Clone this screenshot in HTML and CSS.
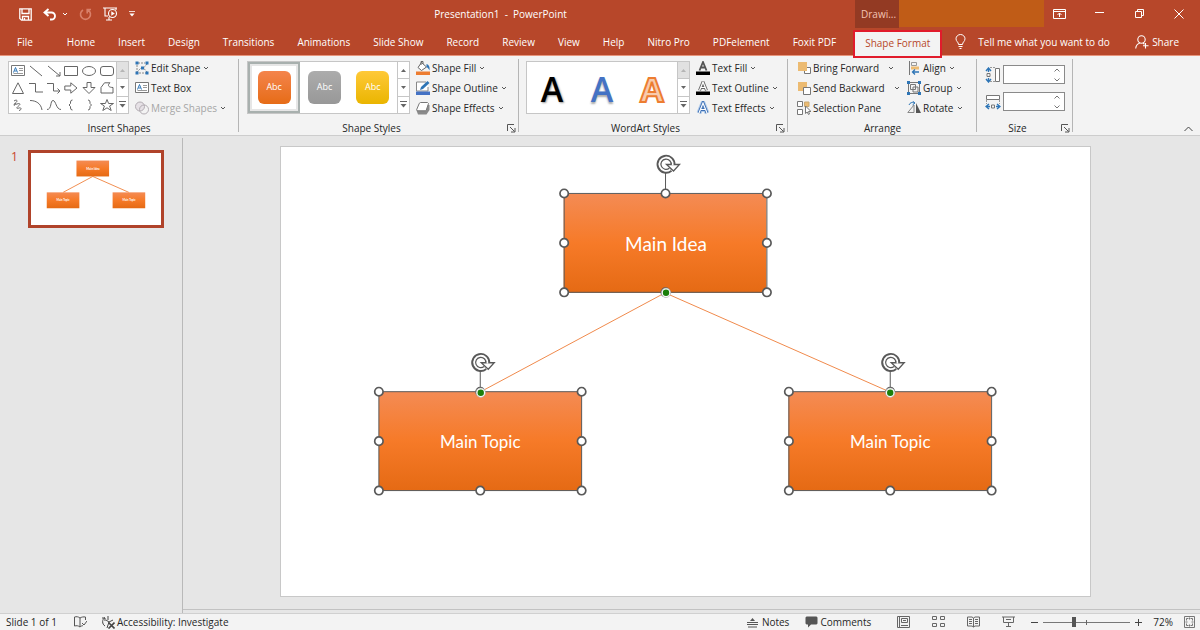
FILE: index.html
```html
<!DOCTYPE html>
<html lang="en">
<head>
<meta charset="utf-8">
<title>Presentation1 - PowerPoint</title>
<link rel="stylesheet" href="styles.css">
</head>
<body>
<svg class="defs" aria-hidden="true">
  <defs>
    <linearGradient id="orange" x1="0" y1="0" x2="0" y2="1">
      <stop offset="0" stop-color="#f48b54"/><stop offset=".5" stop-color="#f67a28"/><stop offset="1" stop-color="#e56a14"/>
    </linearGradient>
    <symbol id="chev" viewBox="0 0 6 6"><path d="M1 2l2 2 2-2" fill="none" stroke="currentColor"/></symbol>
    <symbol id="up" viewBox="0 0 7 7"><path d="M1 5l2.500-3 2.500 3z" fill="currentColor"/></symbol>
    <symbol id="down" viewBox="0 0 7 7"><path d="M1 2l2.500 3 2.500-3z" fill="currentColor"/></symbol>
    <symbol id="more" viewBox="0 0 7 7"><path d="M0 .5h7" stroke="currentColor"/><path d="M.5 3l3 3.500 3-3.500z" fill="currentColor"/></symbol>
    <symbol id="launch" viewBox="0 0 9 9"><path d="M.5 7V.5H7M3 3l4.500 4.500M8 4v4H4" fill="none" stroke="#555"/></symbol>
    <symbol id="textbox" viewBox="0 0 14 12"><path d="M.5.5h13v10H.5z" fill="#fff" stroke="#777"/><path d="M2.500 7.500l2-5 2 5M3.500 6h2" fill="none" stroke="#2e75b6"/><path d="M8 3.500h4M8 5.500h4M2.500 8.500H12" stroke="#999"/></symbol>
    <g id="handle"><circle r="4.200" fill="#fff" stroke="#595959" stroke-width="1.700"/></g>
    <g id="anchor"><circle r="4.700" fill="#fff" stroke="#aaa" stroke-width=".6"/><circle r="3.200" fill="#1a7f0a"/></g>
    <g id="frame">
      <path d="M0 0h203v99H0zM101.500 0v-21" fill="none" stroke="#595959"/>
      <use href="#handle"/><use href="#handle" x="101.500"/><use href="#handle" x="203"/>
      <use href="#handle" y="49.500"/><use href="#handle" x="203" y="49.500"/>
      <use href="#handle" y="99"/><use href="#handle" x="101.500" y="99"/><use href="#handle" x="203" y="99"/>
      <g transform="translate(102 -29)" fill="none">
        <path d="M4.500 5.200A7 7 0 1 1 7 0" stroke="#595959" stroke-width="5"/>
        <path d="M.5 0h13L7.500 6.500z" fill="#fff" stroke="#595959" stroke-width="1.300"/>
        <path d="M4.200 5A6.700 6.700 0 1 1 6.700 .8" stroke="#fff" stroke-width="1.800"/>
      </g>
    </g>
    <g id="diagram">
      <path class="link" d="M384.500 146L200 245M384.500 146L609 245"/>
      <rect x="283" y="47" width="203" height="99" fill="url(#orange)"/>
      <rect x="98" y="245" width="203" height="99" fill="url(#orange)"/>
      <rect x="508" y="245" width="203" height="99" fill="url(#orange)"/>
      <text class="idea" x="385.500" y="104">Main Idea</text>
      <text class="topic" x="199.500" y="301">Main Topic</text>
      <text class="topic" x="610" y="301">Main Topic</text>
    </g>
  </defs>
</svg>

<header class="titlebar">
  <div class="quick">
    <button aria-label="Save"><svg width="13" height="13" viewBox="0 0 13 13" fill="none" stroke="#fff" stroke-width="1.300"><path d="M.8.8h11.400v11.400H2.500L.8 10.500zM3 1v4.500h7V1M3.500 12V8.500h6V12M5.500 10v2"/></svg></button>
    <button class="undo" aria-label="Undo"><svg width="14" height="13" viewBox="0 0 14 13" fill="none" stroke="#fff" stroke-width="1.900"><path d="M5.500 1L1.500 4.500l4 3.500M2 4.500h6.500a3.500 3.500 0 0 1 0 7H7"/></svg><svg width="6" height="6"><use href="#chev"/></svg></button>
    <button aria-label="Repeat"><svg width="13" height="13" viewBox="0 0 13 13" fill="none" stroke="#d9806a" stroke-width="1.600"><path d="M4 2a5 5 0 1 0 5 0M8.200 5.500V1.500H12"/></svg></button>
    <button aria-label="Start from beginning"><svg width="15" height="14" viewBox="0 0 15 14" fill="none" stroke="#fff" stroke-width="1.100"><path d="M0 1h14M2 1v8h3M13 1v2M3 13h6M6 10v3"/><circle cx="9.500" cy="6.500" r="4"/><path d="M8.300 4.300l3.500 2.200-3.500 2.200z" fill="#fff" stroke="none"/></svg></button>
    <button aria-label="Customize Quick Access Toolbar"><svg width="6" height="6"><use href="#more"/></svg></button>
  </div>
  <h1>Presentation1&nbsp; -&nbsp; PowerPoint</h1>
  <span class="context">Drawi...</span>
  <span class="account"></span>
  <div class="window">
    <button aria-label="Ribbon Display Options"><svg width="13" height="10" viewBox="0 0 13 10" fill="none" stroke="#fff"><path d="M.5.5h12v9H.5zM1 2.500h11M6.500 8V4M4.500 6l2-2 2 2"/></svg></button>
    <button aria-label="Minimize"><svg width="9" height="9" viewBox="0 0 9 9" stroke="#fff"><path d="M0 3.500h9"/></svg></button>
    <button aria-label="Restore"><svg width="9" height="9" viewBox="0 0 9 9" fill="none" stroke="#fff"><path d="M.5 2.500h6v6h-6zM2.500 2V.5h6v6H7"/></svg></button>
    <button aria-label="Close"><svg width="10" height="10" viewBox="0 0 10 10" stroke="#fff"><path d="M.5.5l9 9M9.500.5l-9 9"/></svg></button>
  </div>
</header>

<nav class="tabs">
  <button class="file">File</button><button>Home</button><button>Insert</button><button>Design</button><button>Transitions</button><button>Animations</button><button>Slide Show</button><button>Record</button><button>Review</button><button>View</button><button>Help</button><button>Nitro Pro</button><button>PDFelement</button><button>Foxit PDF</button>
  <button class="active">Shape Format</button>
  <button class="tell"><svg width="11" height="15" viewBox="0 0 11 15" fill="none" stroke="#fff"><path d="M3.500 10.500C3.500 8 1 7.500 1 4.800a4.500 4.300 0 0 1 9 0C10 7.500 7.500 8 7.500 10.500zM3.500 12.500h4M4.500 14.500h2"/></svg>Tell me what you want to do</button>
  <button class="share"><svg width="14" height="14" viewBox="0 0 14 14" fill="none" stroke="#fff" stroke-width="1.100"><circle cx="6.500" cy="4.500" r="3.700"/><path d="M.7 13.500c.3-3 1.800-4.800 4-5.300M8 8.300l1.500 1M10.500 8v5.500M8 10.700h5.500"/></svg>Share</button>
</nav>

<section class="ribbon">
  <div class="group insert">
    <div class="tools">
      <div class="gallery">
        <div class="shapes">
          <button aria-label="Text Box"><svg width="14" height="12"><use href="#textbox"/></svg></button>
          <button aria-label="Line"><svg viewBox="0 0 14 12"><path d="M1 1l12 10"/></svg></button>
          <button aria-label="Arrow"><svg viewBox="0 0 14 12"><path d="M1 1l12 10M13 7v4H9"/></svg></button>
          <button aria-label="Rectangle"><svg viewBox="0 0 14 12"><path d="M.5 1.500h13v9H.5z"/></svg></button>
          <button aria-label="Oval"><svg viewBox="0 0 14 12"><ellipse cx="7" cy="6" rx="6.500" ry="4.500"/></svg></button>
          <button aria-label="Rounded Rectangle"><svg viewBox="0 0 14 12"><rect x=".5" y="1.500" width="13" height="9" rx="2.500"/></svg></button>
          <button aria-label="Triangle"><svg viewBox="0 0 14 12"><path d="M7 .8l5.500 10.700h-11z"/></svg></button>
          <button aria-label="Elbow Connector"><svg viewBox="0 0 14 12"><path d="M0 1.500h6.500v8.500H14"/></svg></button>
          <button aria-label="Elbow Arrow"><svg viewBox="0 0 14 12"><path d="M0 1.500h6.500V9H13M10.500 6.500L13 9l-2.500 2.500"/></svg></button>
          <button aria-label="Right Arrow"><svg viewBox="0 0 14 12"><path d="M.8 4h6V.8L13 6l-6.200 5.200V8h-6z"/></svg></button>
          <button aria-label="Down Arrow"><svg viewBox="0 0 14 12"><path d="M5 .5h4v5h4L7 11.500 1 5.500h4z"/></svg></button>
          <button aria-label="Freeform"><svg viewBox="0 0 14 12"><path d="M4.500.8h5.500c-3.500 3-.5 4.700 3 4.700v5.500H1V5.500z"/></svg></button>
          <button aria-label="Scribble"><svg viewBox="0 0 14 12"><path d="M3 2c3-2 4 0 2 1.500S3 6 6 5s4 0 1.500 2-2 3 .5 2 3 2 0 2.500M5 4C3 5 2 7 4 6"/></svg></button>
          <button aria-label="Arc"><svg viewBox="0 0 14 12"><path d="M1 1.500c6 0 11 3 12 9.500"/></svg></button>
          <button aria-label="Curve"><svg viewBox="0 0 14 12"><path d="M0 10.500c5 0 3-9 6-9s3 9 8 9"/></svg></button>
          <button aria-label="Left Brace"><svg viewBox="0 0 14 12"><path d="M8.500 1Q6.500 1 6.500 3v1.500L5 6l1.500 1.500V9q0 2 2 2"/></svg></button>
          <button aria-label="Right Brace"><svg viewBox="0 0 14 12"><path d="M6 1q2 0 2 2v1.500L9.500 6 8 7.500V9q0 2-2 2"/></svg></button>
          <button aria-label="Star"><svg viewBox="0 0 14 12"><path d="M7 .5l1.600 4h4.900L9.600 7l1.600 4.500L7 8.800l-4.200 2.700L4.400 7 .5 4.500h4.900z"/></svg></button>
        </div>
        <div class="scroll"><button class="off" aria-label="Up"><svg><use href="#up"/></svg></button><button aria-label="Down"><svg><use href="#down"/></svg></button><button aria-label="More"><svg><use href="#more"/></svg></button></div>
      </div>
      <div class="list">
        <button><svg class="ico" viewBox="0 0 14 14" fill="none"><path d="M2 4v7l4-4M3 2l7 0M12 3L8.500 7l3.500 4M4 12h7" stroke="#888" stroke-dasharray="2 1"/><path d="M.5.5h3v3h-3zM10.500.5h3v3h-3zM.5 10.500h3v3h-3zM10.500 10.500h3v3h-3zM6 5.500h3v3H6z" fill="#2e75b6"/></svg>Edit Shape<svg class="chev"><use href="#chev"/></svg></button>
        <button><svg class="ico" viewBox="0 -1 14 14"><use href="#textbox" width="14" height="12"/></svg>Text Box</button>
        <button disabled><svg class="ico" viewBox="0 0 14 14" fill="#e6e1e6" stroke="#b3adb3"><circle cx="5" cy="5.500" r="4.500"/><circle cx="9" cy="8.500" r="4.500" fill="none"/></svg>Merge Shapes<svg class="chev"><use href="#chev"/></svg></button>
      </div>
    </div>
    <div class="caption"><span>Insert Shapes</span></div>
  </div>

  <div class="group styles">
    <div class="tools">
      <div class="gallery">
        <div class="swatches"><button class="sel"><span class="sw o">Abc</span></button><button><span class="sw g">Abc</span></button><button><span class="sw y">Abc</span></button></div>
        <div class="scroll"><button aria-label="Up"><svg><use href="#up"/></svg></button><button aria-label="Down"><svg><use href="#down"/></svg></button><button aria-label="More"><svg><use href="#more"/></svg></button></div>
      </div>
      <div class="list">
        <button><svg class="ico" viewBox="0 0 14 14" fill="none"><path d="M5.500 1.500l5 4.500-5 3.500-3.500-3z" fill="#fff" stroke="#666"/><path d="M5 4V.5h2V3" stroke="#666"/><path d="M10.500 3c2.500.5 3.500 3 3 6.500-.8-2-2-3-3-3.500z" fill="#2e75b6"/><path d="M0 10.500h14V14H0z" fill="#ed7d31"/></svg>Shape Fill<svg class="chev"><use href="#chev"/></svg></button>
        <button><svg class="ico" viewBox="0 0 14 14" fill="none"><path d="M10 1H.5v9H12V6" fill="#fff" stroke="#888"/><path d="M4 9l1-3 6.500-6L13.500 2 7 8z" fill="#2e75b6"/><path d="M0 10.500h14V14H0z" fill="#4472c4"/></svg>Shape Outline<svg class="chev"><use href="#chev"/></svg></button>
        <button><svg class="ico" viewBox="0 0 14 14"><path d="M4 4h9.500v5l-3 4.500H2L.3 9z" fill="#8a8a8a"/><path d="M4.500 1.500h7l1 1-2.200 6.500-1 .8H1.500l-.8-1.300L3.300 2.300z" fill="#fff" stroke="#777"/></svg>Shape Effects<svg class="chev"><use href="#chev"/></svg></button>
      </div>
    </div>
    <div class="caption"><span>Shape Styles</span><button aria-label="Format Shape"><svg width="9" height="9"><use href="#launch"/></svg></button></div>
  </div>

  <div class="group wordart">
    <div class="tools">
      <div class="gallery">
        <div class="letters"><button class="a1">A</button><button class="a2">A</button><button class="a3">A</button></div>
        <div class="scroll"><button class="off" aria-label="Up"><svg><use href="#up"/></svg></button><button aria-label="Down"><svg><use href="#down"/></svg></button><button aria-label="More"><svg><use href="#more"/></svg></button></div>
      </div>
      <div class="list">
        <button><svg class="ico" viewBox="0 0 14 14"><path d="M3.500 9.500L7 1l3.500 8.500M5 6.500h4" fill="none" stroke="#555" stroke-width="1.800"/><path d="M0 10.500h14V14H0z"/></svg>Text Fill<svg class="chev"><use href="#chev"/></svg></button>
        <button><svg class="ico" viewBox="0 0 14 14"><path d="M3.500 9.500L7 1l3.500 8.500M5 6.500h4" fill="none" stroke="#666" stroke-width="3"/><path d="M3.500 9.500L7 1l3.500 8.500M5 6.500h4" fill="none" stroke="#fff" stroke-width="1.200"/><path d="M0 10.500h14V14H0z"/></svg>Text Outline<svg class="chev"><use href="#chev"/></svg></button>
        <button><svg class="ico" viewBox="0 0 14 14"><path d="M3 12l4-10 4 10M5 8.500h4" fill="none" stroke="#b4cdea" stroke-width="5"/><path d="M3 12l4-10 4 10M5 8.500h4" fill="none" stroke="#3c6fb5" stroke-width="3"/><path d="M3 12l4-10 4 10M5 8.500h4" fill="none" stroke="#fff" stroke-width="1.200"/></svg>Text Effects<svg class="chev"><use href="#chev"/></svg></button>
      </div>
    </div>
    <div class="caption"><span>WordArt Styles</span><button aria-label="Format Text Effects"><svg width="9" height="9"><use href="#launch"/></svg></button></div>
  </div>

  <div class="group arrange">
    <div class="tools">
      <div class="list wide">
        <button><svg class="ico" viewBox="0 0 14 14"><path d="M8.500 6.500h5v6h-6v-3" fill="#fff" stroke="#777"/><path d="M1 1h9v9H1z" fill="#ecbb72"/></svg>Bring Forward<svg class="chev"><use href="#chev"/></svg></button>
        <button><svg class="ico" viewBox="0 0 14 14"><path d="M1 1h9v9H1z" fill="#ecbb72"/><path d="M6.500 6.500h7v7h-7z" fill="#fff" stroke="#777"/></svg>Send Backward<svg class="chev"><use href="#chev"/></svg></button>
        <button><svg class="ico" viewBox="0 0 14 14" fill="#fff" stroke="#777"><path d="M.5.5h5v5h-5zM.5 8.500h5v5h-5z"/><path d="M7.500 1h4.500v4.500H7.500z" fill="#ecbb72" stroke="#c9a870"/><path d="M8.500 5v7.500l1.700-1.500 1.300 2.500 1-.5-1-2.500H14z"/></svg>Selection Pane</button>
      </div>
      <div class="list">
        <button><svg class="ico" viewBox="0 0 14 14" fill="none"><path d="M2.500 0v14" stroke="#777"/><path d="M4.500 1.500h5v3h-5z" stroke="#999"/><path d="M4 5.500h8v3H4z" fill="#ecbb72"/><path d="M12 11H5.500M8 8.500L5.500 11 8 13.500" stroke="#2e75b6" stroke-width="1.300"/></svg>Align<svg class="chev"><use href="#chev"/></svg></button>
        <button><svg class="ico" viewBox="0 0 14 14" fill="none"><path d="M3.500 3.500h5v5h-5zM6 6h5v5H6zM3 1.500h8M3 12.500h8M1.500 3v8M12.500 3v8" stroke="#777"/><path d="M0 0h3v3H0zM11 0h3v3h-3zM0 11h3v3H0zM11 11h3v3h-3z" fill="#2e75b6"/></svg>Group<svg class="chev"><use href="#chev"/></svg></button>
        <button><svg class="ico" viewBox="0 0 14 14" fill="none"><path d="M7 4v7.500H.8z" stroke="#888"/><path d="M9 2v10h5z" fill="#555"/><path d="M2 4c1-2.500 3-3 5-2M5.500 0L8 2 5.500 4" stroke="#2e75b6"/></svg>Rotate<svg class="chev"><use href="#chev"/></svg></button>
      </div>
    </div>
    <div class="caption"><span>Arrange</span></div>
  </div>

  <div class="group size">
    <div class="fields">
      <label for="h"><svg width="16" height="16" viewBox="0 0 16 16" fill="none"><path d="M10.500 1.500h4v13h-4z" fill="#fff" stroke="#777"/><path d="M5 .5h5M5 14.500h5" stroke="#999" stroke-dasharray="2 1"/><path d="M3.500 1v4M1 4l2.500-3L6 4M3.500 11v4M1 12l2.500 3L6 12" stroke="#2e75b6" stroke-width="1.400"/><path d="M2 6.500h3v3H2z" stroke="#777"/></svg></label>
      <div class="spin"><input id="h" type="text" aria-label="Shape Height"><svg width="6" height="14" viewBox="0 0 6 14" fill="none" stroke="#777"><path d="M.5 3.500L3 1l2.500 2.500M.5 10.500L3 13l2.500-2.500"/></svg></div>
      <label for="w"><svg width="16" height="16" viewBox="0 0 16 16" fill="none"><path d="M1.500 1.500h13v4h-13z" fill="#fff" stroke="#777"/><path d="M1.500 6v4M14.500 6v4" stroke="#999" stroke-dasharray="2 1"/><path d="M1 12.500h4M4 10l-3 2.500L4 15M11 12.500h4M12 10l3 2.500L12 15" stroke="#2e75b6" stroke-width="1.400"/><path d="M6.500 11h3v3h-3z" stroke="#777"/></svg></label>
      <div class="spin"><input id="w" type="text" aria-label="Shape Width"><svg width="6" height="14" viewBox="0 0 6 14" fill="none" stroke="#777"><path d="M.5 3.500L3 1l2.500 2.500M.5 10.500L3 13l2.500-2.500"/></svg></div>
    </div>
    <div class="caption"><span>Size</span><button aria-label="Size and Position"><svg width="9" height="9"><use href="#launch"/></svg></button></div>
  </div>
  <button class="collapse" aria-label="Collapse the Ribbon"><svg width="9" height="6" viewBox="0 0 9 6" fill="none" stroke="#444"><path d="M.5 5l4-4 4 4"/></svg></button>
</section>

<main class="work">
  <aside class="panel">
    <span class="num">1</span>
    <svg class="thumb" viewBox="0 0 810 450" role="img" aria-label="Slide 1"><use href="#diagram"/></svg>
  </aside>
  <div class="stage">
    <svg class="slide" viewBox="0 0 810 450">
      <use href="#diagram"/>
      <use href="#frame" x="283.500" y="46.500"/>
      <use href="#frame" x="98" y="245"/>
      <use href="#frame" x="508.500" y="245"/>
      <use href="#anchor" x="385.500" y="146"/>
      <use href="#anchor" x="200" y="246"/>
      <use href="#anchor" x="610" y="246"/>
    </svg>
  </div>
</main>

<footer class="status">
  <span>Slide 1 of 1</span>
  <button class="spell" aria-label="Spelling"><svg width="13" height="12" viewBox="0 0 13 12" fill="none" stroke="#555"><path d="M6 2v9M6 2C4 .5 2.500.5.500 1v9c2-.5 3.500-.5 5.500 1 1-1 2-1.300 3-1.300M6 2c1.500-1 3.500-1.300 5.500-1v3M8 7l2 2 3-4"/></svg></button>
  <button class="access"><svg width="14" height="13" viewBox="0 0 14 13" fill="none" stroke="#444"><path d="M4 1.500a5 5 0 0 0 0 8.500M1 2h3v3M7 0v4M5 4l3 2 4-2M8 6l-2 6" /><path d="M7.500 6.500l6 6M13.500 6.500l-6 6" stroke-width="1.600"/></svg>Accessibility: Investigate</button>
  <div class="right">
    <button class="notes"><svg width="11" height="11" viewBox="0 0 11 11"><path d="M3 4l2.500-3L8 4z" fill="#555"/><path d="M0 5.500h11M0 7.500h11M1 10h9" stroke="#555"/></svg>Notes</button>
    <button class="comments"><svg width="13" height="12" viewBox="0 0 13 12"><path d="M1.500.5h10l1 1v6l-1 1H6L3 11.500v-3H1.500l-1-1v-6z" fill="#555"/></svg>Comments</button>
    <div class="views">
      <button aria-label="Normal"><svg width="13" height="12" viewBox="0 0 13 12" fill="none" stroke="#666"><path d="M.5.5h12v11H.5zM2.500 1v10M4.500 2.500h6v4h-6zM6 4.500h3M4 9.500h7"/></svg></button>
      <button aria-label="Slide Sorter"><svg width="13" height="12" viewBox="0 0 13 12" fill="none" stroke="#666"><path d="M.5.5h4v3h-4zM8.500.5h4v3h-4zM.5 7.500h4v3h-4zM8.500 7.500h4v3h-4z"/></svg></button>
      <button aria-label="Reading View"><svg width="13" height="12" viewBox="0 0 13 12" fill="none" stroke="#666"><path d="M.5 1h4.500l1.500 1L8 1h4.500v9H8l-1.500 1L5 10H.5zM6.500 2v9M2 3.500h3M2 5.500h3M2 7.500h3M8 3.500h3M8 5.500h3M8 7.500h3"/></svg></button>
      <button aria-label="Slide Show"><svg width="13" height="12" viewBox="0 0 13 12" fill="none" stroke="#666"><path d="M0 1h13M1.500 1v5.500h10V1M4 3.500h5M6.500 7v3M4 10.500h5"/></svg></button>
    </div>
    <button class="step" aria-label="Zoom Out"><svg width="7" height="7" viewBox="0 0 7 7" stroke="#444"><path d="M0 3.500h7"/></svg></button>
    <input class="zoom" type="range" aria-label="Zoom" min="0" max="100" value="35">
    <button class="step" aria-label="Zoom In"><svg width="7" height="7" viewBox="0 0 7 7" stroke="#444"><path d="M0 3.500h7M3.500 0v7"/></svg></button>
    <button class="pct">72%</button>
    <button aria-label="Fit slide to window"><svg width="11" height="12" viewBox="0 0 11 12" fill="none" stroke="#777"><path d="M.5.5h10v11H.5zM5.500 1.500v2M5.500 8.500v2M1.500 6h2M7.500 6h2M2.500 4.500v-2h2M8.500 4.500v-2h-2M2.500 7.500v2h2M8.500 7.500v2h-2"/></svg></button>
  </div>
</footer>
</body>
</html>
```

FILE: styles.css
```css
* { box-sizing: border-box; }
body {
  margin: 0;
  min-height: 100vh;
  display: flex;
  flex-direction: column;
  font: 10px/14px "Open Sans", "Noto Sans", sans-serif;
  color: #262626;
  background: #e6e6e6;
}
button {
  display: inline-flex;
  align-items: center;
  padding: 0;
  border: 0;
  background: none;
  font: inherit;
  color: inherit;
  white-space: nowrap;
}
svg { flex: none; display: block; }
.defs { position: absolute; width: 0; height: 0; }

/* Title bar */
.titlebar { display: flex; height: 28px; background: #b7472a; color: #fff; }
.quick { display: flex; align-items: center; gap: 11px; width: 146px; padding-left: 19px; }
.undo { gap: 5px; }
h1 { flex: 1; margin: 0; font: inherit; line-height: 28px; text-align: center; }
.context { width: 44px; padding-left: 6px; line-height: 28px; background: #933a23; color: #f4c3b3; }
.account { width: 145px; height: 27px; background: #c05c17; }
.window { display: flex; gap: 10px; padding-right: 6px; height: 27px; }
.window button { width: 30px; justify-content: center; }

/* Ribbon tabs */
.tabs {
  display: flex;
  height: 28px;
  padding-left: 6px;
  background: #b7472a;
  border-bottom: 1px solid #e8957c;
  color: #fff;
}
.tabs button { padding: 0 12px 0 11px; }
.tabs .file { margin-right: 11px; }
.tabs .active {
  height: 28px;
  margin-top: 2px;
  margin-left: 5px;
  padding: 0 10px 3px;
  border: 2px solid #e11b2b;
  background: #f3f3f3;
  color: #b7472a;
  z-index: 1;
}
.tabs .tell { gap: 12px; padding-left: 13px; }
.tabs .share { gap: 3px; margin-left: auto; padding-right: 21px; }

/* Ribbon */
.ribbon { display: flex; height: 80px; background: #f3f3f3; border-bottom: 1px solid #cdcdcd; }
.group {
  display: flex;
  flex-direction: column;
  justify-content: space-between;
  margin: 3px 0;
  padding-top: 2px;
  border-right: 1px solid #b5b5b5;
}
.insert { width: 239px; padding-left: 8px; }
.styles { width: 280px; padding-left: 8px; }
.wordart { width: 269px; padding-left: 7px; }
.arrange { width: 189px; padding-left: 9px; }
.size { width: 96px; padding-left: 8px; }
.tools { display: flex; gap: 6px; }
.caption { display: flex; align-items: center; height: 14px; margin-bottom: -3px; }
.caption span { flex: 1; text-align: center; }
.caption button { width: 13px; justify-content: center; }
.insert .caption, .arrange .caption { margin-left: -8px; }
.styles .caption, .wordart .caption, .size .caption { margin-left: -9px; }
.gallery { display: flex; height: 53px; border: 1px solid #c6c6c6; background: #fff; }
.scroll { display: flex; flex-direction: column; width: 12px; border-left: 1px solid #c6c6c6; color: #666; }
.scroll button { flex: 1; justify-content: center; }
.scroll button + button { border-top: 1px solid #c6c6c6; }
.scroll svg { width: 7px; height: 7px; }
.scroll .off { background: #e1e1e1; color: #b5b5b5; }
.shapes { display: grid; grid-template-columns: repeat(6, 1fr); width: 107px; }
.shapes button { justify-content: center; }
.shapes svg { width: 14px; height: 12px; fill: none; stroke: #666; }
.list { display: flex; flex-direction: column; margin-top: -3px; }
.list button { height: 20px; gap: 2px; }
.list button:disabled { color: #a6a6a6; }
.ico { width: 14px; height: 14px; }
.chev { width: 6px; height: 6px; margin-left: 1px; color: #555; }
.wide { width: 104px; }
.wide .chev { margin-left: 7px; }

.swatches { display: flex; width: 149px; }
.swatches button { flex: 1; justify-content: center; }
.swatches .sel { border: 2px solid #a8b0ae; box-shadow: inset 0 0 0 2px #e6e6e6; }
.sw { width: 33px; height: 33px; border-radius: 6px; line-height: 31px; text-align: center; font-size: 9px; color: #fff; }
.o { background: linear-gradient(#f4844c, #e66c17); }
.g { background: linear-gradient(#acacac, #989898); }
.y { background: linear-gradient(#ffc938, #eab500); }

.letters { display: flex; width: 150px; }
.letters button { flex: 1; justify-content: center; padding-top: 2px; font-size: 34px; font-weight: 600; }
.letters .a1 { color: #000; text-shadow: 1px 1px 2px #999; }
.letters .a2 { color: #4472c4; text-shadow: 0 2px 2px #aaa; }
.letters .a3 { color: #f8cbad; font-weight: 700; -webkit-text-stroke: 2px #ed7d31; }

.fields { display: grid; grid-template-columns: 18px 62px; row-gap: 8px; padding-top: 4px; align-items: center; }
.spin { display: flex; align-items: center; padding-right: 4px; height: 19px; border: 1px solid #8a8a8a; background: #fff; }
.spin input { flex: 1; min-width: 0; border: 0; padding: 0 3px; font: inherit; outline: 0; background: none; }
.collapse { margin-left: auto; padding: 0 7px 3px 0; align-items: flex-end; }

/* Workspace */
.work { flex: 1; display: flex; }
.panel { display: flex; align-items: flex-start; gap: 10px; width: 183px; margin-top: 2px; padding: 12px 18px 0 11px; border-right: 1px solid #b9b9b9; }
.num { font-size: 12px; color: #c8452b; }
.thumb { flex: 1; background: #fff; border: 3px solid #b0432a; }
.stage { flex: 1; padding: 10px 109px 12px 97px; border-bottom: 1px solid #c2c2c2; margin-bottom: 3px; }
.slide { width: 100%; background: #fff; border: 1px solid #c8c8c8; }
.link { fill: none; stroke: #f08a4b; }
.thumb { stroke-width: 6px; font-weight: 700; }
.idea, .topic { fill: #fff; text-anchor: middle; font-family: Lato, "Open Sans", sans-serif; }
.idea { font-size: 19px; }
.topic { font-size: 17px; }

/* Status bar */
.status { display: flex; align-items: center; height: 18px; padding: 0 5px 1px 6px; background: #f3f3f3; border-top: 1px solid #d0d0d0; }
.spell { margin-left: 17px; }
.access { gap: 2px; margin-left: 14px; }
.right { display: flex; align-items: center; margin-left: auto; }
.notes { gap: 4px; }
.comments { gap: 2px; margin-left: 16px; }
.views { display: flex; gap: 22px; margin: 0 16px 0 26px; }
.zoom {
  appearance: none;
  width: 87px;
  height: 10px;
  margin: 0 5px;
  background:
    linear-gradient(#666, #666) center / 1px 5px no-repeat,
    linear-gradient(#777, #777) center / 100% 1px no-repeat;
}
.zoom::-webkit-slider-thumb { appearance: none; width: 4px; height: 10px; background: #555; }
.pct { margin: 0 11px; }
```
